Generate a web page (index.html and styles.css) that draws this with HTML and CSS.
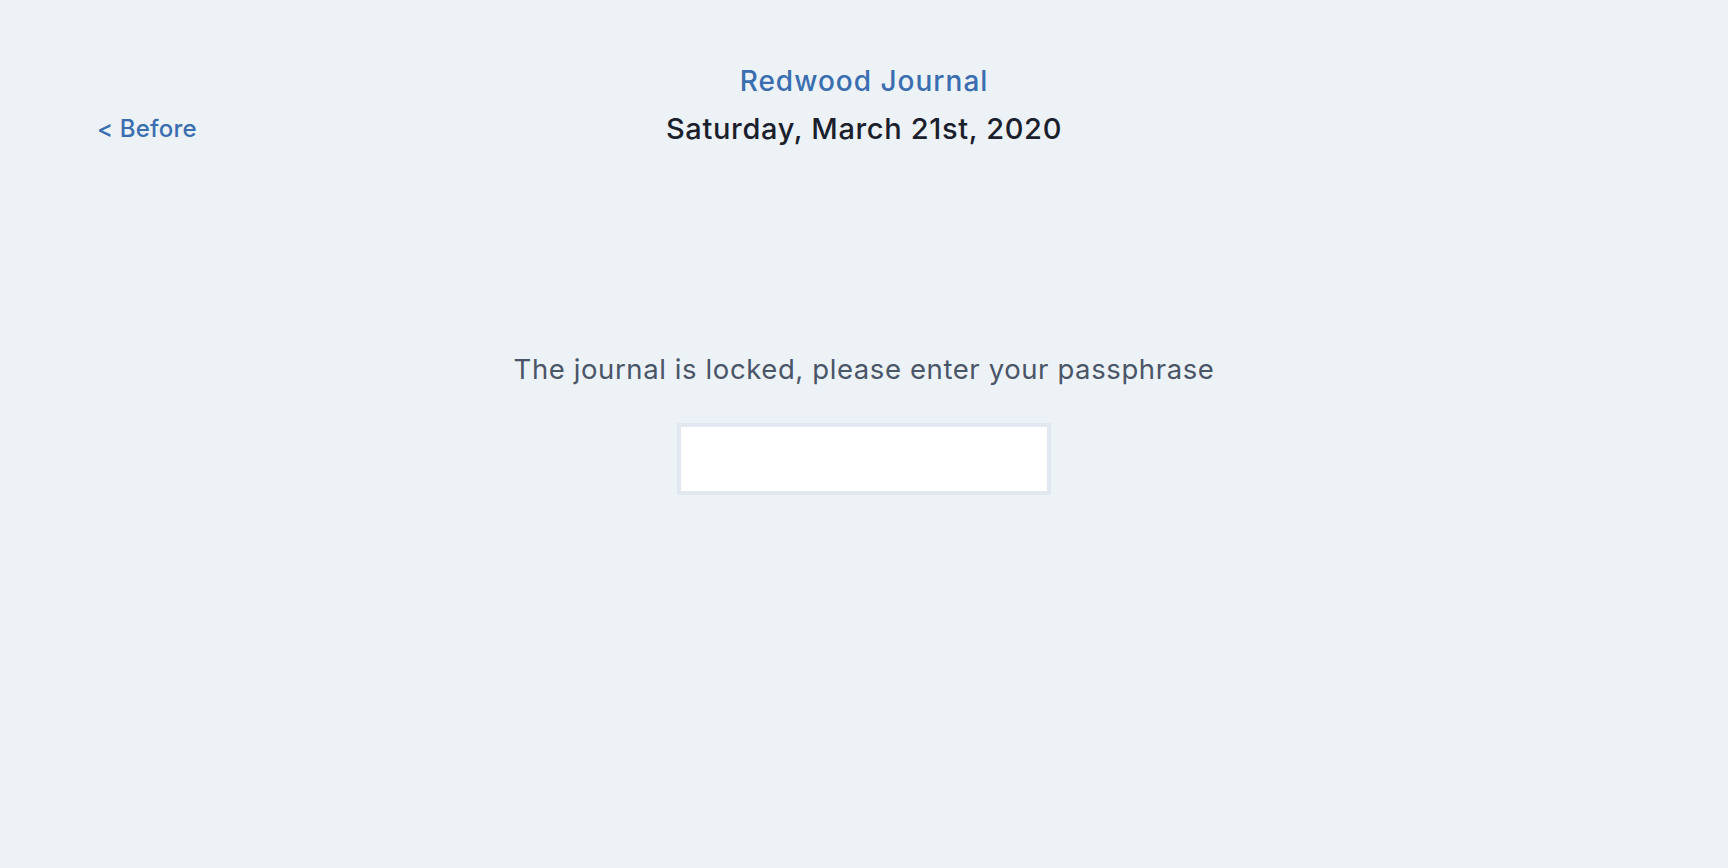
FILE: index.html
```html
<!DOCTYPE html>
<html lang="en">
<head>
<meta charset="utf-8">
<title>Redwood Journal</title>
<link rel="stylesheet" href="styles.css">
</head>
<body>
<div class="page">
  <header class="header">
    <div class="nav-left"><a class="nav-link" href="#">&lt; Before</a></div>
    <div class="heading">
      <a class="brand" href="#">Redwood Journal</a>
      <h1 class="date">Saturday, March 21st, 2020</h1>
    </div>
    <div class="nav-right"></div>
  </header>
  <main class="locked">
    <p class="locked-msg">The journal is locked, please enter your passphrase</p>
    <input class="pass-input" type="password" aria-label="Passphrase">
  </main>
</div>
</body>
</html>
```
FILE: styles.css
```css
* { box-sizing: border-box; }
html, body {
  margin: 0;
  padding: 0;
  background: #edf2f7;
  font-family: Inter, "Noto Sans", sans-serif;
}
.page {
  min-height: 868px;
  padding-top: 61px;
}
.header {
  display: grid;
  grid-template-columns: 1fr auto 1fr;
  align-items: end;
  padding: 0 97px;
}
.nav-left { display: flex; }
.nav-link {
  color: #3a6eb0;
  text-decoration: none;
  font-size: 24px;
  font-weight: 500;
  line-height: 34px;
  letter-spacing: 0.2px;
}
.heading {
  display: flex;
  flex-direction: column;
  align-items: center;
}
.brand {
  color: #3a6eb0;
  text-decoration: none;
  font-size: 28px;
  font-weight: 500;
  line-height: 40px;
  letter-spacing: 1px;
}
.date {
  margin: 11px 0 0;
  color: #1a202c;
  font-size: 29px;
  font-weight: 500;
  line-height: 34px;
  letter-spacing: 0.65px;
}
.locked {
  display: flex;
  flex-direction: column;
  align-items: center;
  padding-top: 205px;
}
.locked-msg {
  margin: 0;
  color: #4a5568;
  font-size: 27.5px;
  font-weight: 400;
  line-height: 36px;
  letter-spacing: 0.6px;
}
.pass-input {
  margin-top: 36px;
  width: 374px;
  height: 72px;
  border: 4px solid #e2e8f0;
  background: #fff;
  outline: none;
  font-size: 24px;
  padding: 0 12px;
}
```
